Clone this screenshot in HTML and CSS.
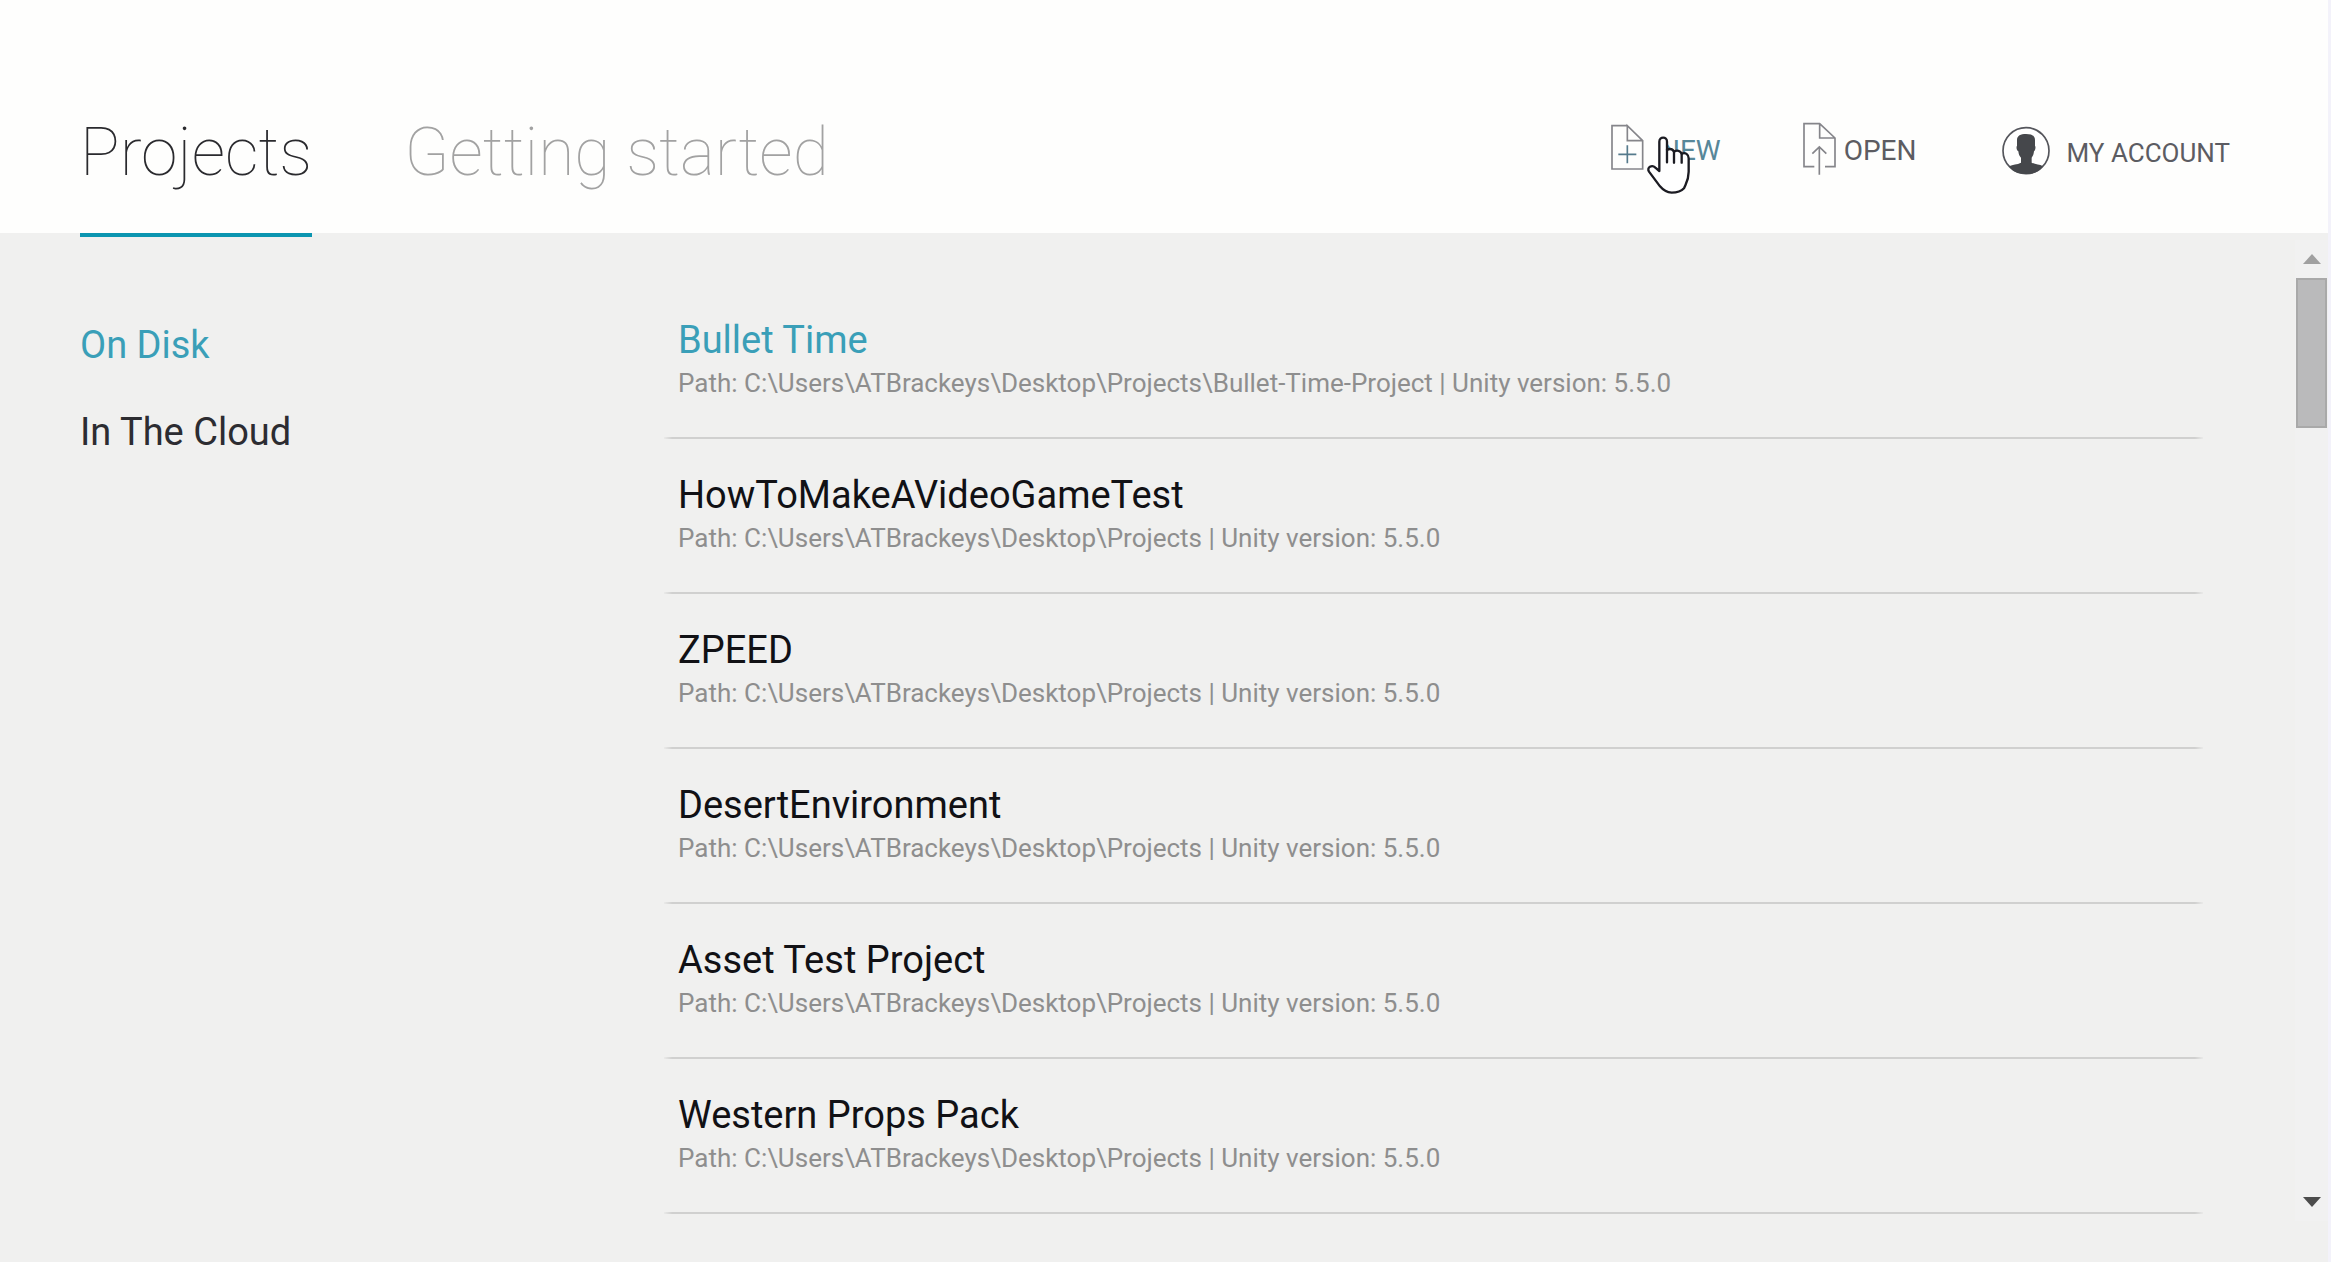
FILE: index.html
```
<!DOCTYPE html>
<html lang="en">
<head>
<meta charset="utf-8">
<title>Projects</title>
<link rel="stylesheet" href="styles.css">
</head>
<body>
<header class="header">
  <nav class="tabs">
    <a class="tab tab-active" href="#projects">Projects</a>
    <a class="tab" href="#getting-started">Getting started</a>
  </nav>
  <div class="actions">
    <button class="action action-new" type="button">
      <svg class="icon-page" viewBox="33 21 99 174" aria-hidden="true">
        <path class="page-line" d="M82 32H36V162H128V77L82 32V77H128"/>
        <path class="plus-line" d="M55 118H109M82 91V145"/>
      </svg>
      <span>NEW</span>
      <svg class="cursor" viewBox="138 60 138 180" aria-hidden="true">
        <path d="M178 168V80C178 64 201 64 201 80V105C210 100 218 103 222 110C232 104 241 108 245 116C256 111 266 118 266 130V170C266 195 258 205 252 220C242 231 228 233 215 233C200 232 190 226 180 214L147 170C139 157 156 148 166 158Z"/>
        <path d="M201 104V142M222 110V143M245 116V143"/>
      </svg>
    </button>
    <button class="action action-open" type="button">
      <svg class="icon-page" viewBox="636 66 99 174" aria-hidden="true">
        <path class="page-line" d="M670 200H639V71H686L732 114V200H702M686 71V114H732M685 224V142M664 161L685 141L706 161"/>
      </svg>
      <span>OPEN</span>
    </button>
    <button class="action action-account" type="button">
      <svg class="icon-avatar" viewBox="27 33 156 162" aria-hidden="true">
        <circle cx="111" cy="107" r="69"/>
        <path d="M84 75C84 62 95 57 111 57C128 57 138 62 138 75V92C141 96 139 106 135 109C134 120 131 124 128 128V143C140 150 152 147 162 154C150 172 132 177 111 177C90 177 72 172 60 154C72 147 84 150 96 143V128C92 124 89 120 88 109C83 106 81 96 84 92Z"/>
      </svg>
      <span>MY ACCOUNT</span>
    </button>
  </div>
</header>
<main class="main">
  <nav class="sources">
    <a class="source source-active" href="#disk">On Disk</a>
    <a class="source" href="#cloud">In The Cloud</a>
  </nav>
  <ul class="projects">
    <li class="project project-active"><a href="#p1">Bullet Time</a><p>Path: C:\Users\ATBrackeys\Desktop\Projects\Bullet-Time-Project | Unity version: 5.5.0</p></li>
    <li class="project"><a href="#p2">HowToMakeAVideoGameTest</a><p>Path: C:\Users\ATBrackeys\Desktop\Projects | Unity version: 5.5.0</p></li>
    <li class="project"><a href="#p3">ZPEED</a><p>Path: C:\Users\ATBrackeys\Desktop\Projects | Unity version: 5.5.0</p></li>
    <li class="project"><a href="#p4">DesertEnvironment</a><p>Path: C:\Users\ATBrackeys\Desktop\Projects | Unity version: 5.5.0</p></li>
    <li class="project"><a href="#p5">Asset Test Project</a><p>Path: C:\Users\ATBrackeys\Desktop\Projects | Unity version: 5.5.0</p></li>
    <li class="project"><a href="#p6">Western Props Pack</a><p>Path: C:\Users\ATBrackeys\Desktop\Projects | Unity version: 5.5.0</p></li>
  </ul>
  <div class="scrollbar">
    <button class="scroll-step" type="button" aria-label="Scroll up"><svg viewBox="0 0 18 10" aria-hidden="true"><path d="M9 0L18 10H0Z"/></svg></button>
    <div class="scroll-thumb"></div>
    <button class="scroll-step scroll-down" type="button" aria-label="Scroll down"><svg viewBox="0 0 18 10" aria-hidden="true"><path d="M0 0H18L9 10Z"/></svg></button>
  </div>
</main>
</body>
</html>
```
FILE: styles.css
```
* { box-sizing: border-box; }

body {
  margin: 0;
  min-height: 100vh;
  display: flex;
  flex-direction: column;
  background: #f0f0ef;
  border-right: 3px solid #f3f2fa;
  font-family: Roboto, "Liberation Sans", sans-serif;
}

a { color: inherit; text-decoration: none; }

button {
  padding: 0;
  border: 0;
  background: none;
  color: inherit;
  font: inherit;
}

/* Header */
.header {
  display: flex;
  justify-content: space-between;
  align-items: flex-start;
  padding: 0 98px 0 80px;
  background: #fefefd;
}

.tabs { display: flex; gap: 92px; }

.tab {
  position: relative;
  padding: 114px 0 41px;
  font-size: 66px;
  line-height: 78px;
  font-weight: 100;
  color: #a2a2a2;
}

.tab-active { color: #2a2a2e; }

.tab-active::after {
  content: "";
  position: absolute;
  left: 0;
  right: 0;
  bottom: -4px;
  height: 4px;
  background: #0b95b0;
}

.actions {
  display: flex;
  align-items: flex-start;
  gap: 82px;
  padding-top: 122px;
}

.action {
  position: relative;
  display: flex;
  align-items: center;
  gap: 16px;
  font-size: 28px;
  line-height: 32px;
  font-weight: 400;
  color: #5c5c62;
}

.action-new { color: #578799; cursor: pointer; }
.action-open { gap: 8px; }
.action-account { padding-top: 4px; font-size: 26px; }

.icon-page { width: 33px; height: 58px; }
.icon-avatar { width: 52px; height: 54px; }

.page-line { fill: none; stroke: #85858a; stroke-width: 5; }
.plus-line { fill: none; stroke: #557a8c; stroke-width: 5; }

.icon-avatar circle { fill: #fff; stroke: #55565c; stroke-width: 5; }
.icon-avatar path { fill: #45474b; }

.cursor {
  position: absolute;
  left: 35px;
  top: 13px;
  width: 46px;
  height: 60px;
  fill: #fff;
  stroke: #1b1b22;
  stroke-width: 7;
  stroke-linecap: round;
  stroke-linejoin: round;
}

/* Content */
.main {
  flex: 1;
  display: grid;
  grid-template-columns: 584px 1fr 33px;
  padding: 0 0 41px 80px;
}

.sources {
  display: flex;
  flex-direction: column;
  align-items: flex-start;
  gap: 43px;
  padding-top: 90px;
}

.source {
  font-size: 38px;
  line-height: 44px;
  color: #2c2c31;
}

.source-active { color: #3a9fb8; }

.projects {
  margin: 0;
  padding: 51px 92px 0 0;
  list-style: none;
}

.project {
  display: flex;
  flex-direction: column;
  align-items: flex-start;
  gap: 6px;
  padding: 34px 14px 39px;
  border-bottom: 2px solid;
  border-image: linear-gradient(90deg, transparent, #d0d0cf 10px, #d0d0cf calc(100% - 10px), transparent) 2;
}

.project a {
  font-size: 38px;
  line-height: 44px;
  color: #111115;
}

.project-active a { color: #3a9fb8; }

.project p {
  margin: 0;
  font-size: 26px;
  line-height: 30px;
  color: #8e8e8e;
}

/* Scrollbar */
.scrollbar {
  display: flex;
  flex-direction: column;
  align-items: center;
  margin-top: 7px;
  background: #f1f1f1;
}

.scroll-step {
  display: grid;
  place-items: center;
  width: 33px;
  height: 38px;
}

.scroll-step svg { width: 18px; height: 10px; fill: #a0a0a0; }
.scroll-down { margin-top: auto; }
.scroll-down svg { fill: #4c4c4c; }

.scroll-thumb {
  width: 31px;
  height: 150px;
  background: #bababb;
  border: 2px solid #a9a9a9;
}
```
